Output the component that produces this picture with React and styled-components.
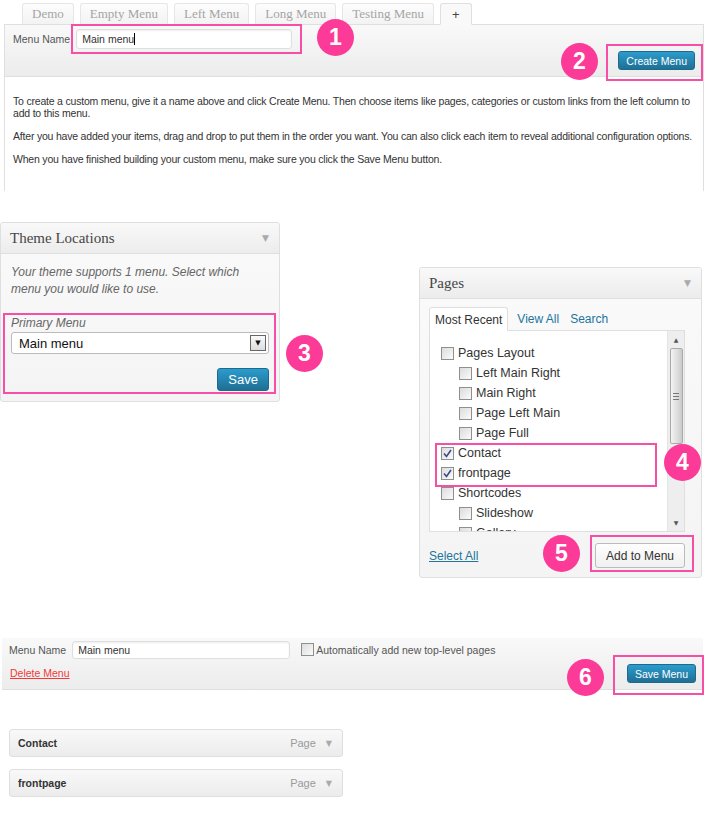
import React from 'react';
import styled, { createGlobalStyle } from 'styled-components';

const GlobalStyle = createGlobalStyle`
  body {
    margin: 0;
    background: #fff;
    font-family: "Liberation Sans", Arial, sans-serif;
    color: #333;
  }
`

const Page = styled.div`
  width: 718px;
  height: 839px;
  overflow: hidden;
`

const Section = styled.div`
  position: relative;
`

const Tabs = styled.div`
  display: flex;
  gap: 6px;
  padding: 3px 0 0 22px;
  position: relative;
  z-index: 1;
`

const Tab = styled.div`
  padding: 0 ${p => p.$plus ? '11px' : '9px'};
  display: flex;
  align-items: center;
  border: 1px solid ${p => p.$active ? '#dfdfdf' : '#e6e6e6'};
  border-bottom: ${p => p.$active ? '1px solid #f9f9f9' : 'none'};
  border-radius: 3px 3px 0 0;
  background: ${p => p.$active ? '#f9f9f9' : 'linear-gradient(#fdfdfd, #f3f3f3)'};
  font-family: ${p => p.$plus ? '"Liberation Sans", Arial, sans-serif' : '"Liberation Serif", "Times New Roman", serif'};
  font-size: 13px;
  color: ${p => p.$plus ? '#444' : '#a5a5a5'};
  margin-bottom: ${p => p.$active ? '-1px' : '0'};
  height: 20px;
`

const EditPanel = styled.div`
  margin-left: 4px;
  width: 698px;
  border: 1px solid #dfdfdf;
  border-bottom: none;
`

const EditHeader = styled.div`
  height: 51px;
  background: linear-gradient(#f9f9f9, #ececec);
  border-bottom: 1px solid #dfdfdf;
  display: flex;
  justify-content: space-between;
  padding: 0 8px;
`

const NameRow = styled.div`
  display: flex;
  align-items: center;
  gap: ${p => p.$gap || 6}px;
  height: ${p => p.$h || 23}px;
  padding-top: ${p => p.$pt ?? 2}px;
`

const Label = styled.span`
  font-size: 10.5px;
  color: #555;
`

const TextInput = styled.div`
  width: ${p => p.$w}px;
  height: ${p => p.$h}px;
  box-sizing: border-box;
  background: #fff;
  border: 1px solid #dfdfdf;
  border-radius: 3px;
  font-size: 10.5px;
  color: #333;
  padding: 0 5px;
  display: flex;
  align-items: center;
  box-shadow: inset 0 1px 2px rgba(0,0,0,0.07);
`

const Caret = styled.span`
  display: inline-block;
  width: 1px;
  height: 12px;
  background: #000;
`

const BlueButton = styled.div`
  height: ${p => p.$h || 19}px;
  box-sizing: border-box;
  padding: 0 ${p => p.$pad || 7}px;
  display: flex;
  align-items: center;
  background: linear-gradient(#2b9ccd, #1f6f94);
  border: 1px solid #1e6a8d;
  border-radius: 3px;
  color: #fff;
  font-size: ${p => p.$size || 10.5}px;
  align-self: flex-end;
  margin-bottom: ${p => p.$mb || 0}px;
`

const EditBody = styled.div`
  height: 114px;
  box-sizing: border-box;
  padding: 7px 8px 0 8px;
  background: #fff;
  font-size: 10.5px;
  letter-spacing: -0.2px;
  line-height: 12px;
  color: #333;

  p {
    margin: 11px 0;
  }
`

const BoxRow = styled.div`
  display: flex;
  justify-content: space-between;
  align-items: flex-start;
  margin-top: 31px;
  padding-right: 16px;
`

const Box = styled.div`
  position: relative;
  width: ${p => p.$w}px;
  margin-top: ${p => p.$top || 0}px;
  box-sizing: border-box;
  border: 1px solid #dfdfdf;
  border-radius: 3px;
  background: linear-gradient(#fafafa, #f4f4f4);
`

const BoxHeader = styled.div`
  height: 30px;
  display: flex;
  align-items: center;
  justify-content: space-between;
  padding: 0 10px 0 9px;
  background: linear-gradient(#f9f9f9, #ececec);
  border-bottom: 1px solid #dfdfdf;
  border-radius: 3px 3px 0 0;
  font-family: "Liberation Serif", "Times New Roman", serif;
  font-size: 15px;
  color: #464646;
`

const Arrow = styled.span`
  font-family: "DejaVu Sans", sans-serif;
  font-size: ${p => p.$size || 9}px;
  color: #aaa;
`

const ThemeBody = styled.div`
  padding: 10px;
`

const Note = styled.div`
  font-style: italic;
  font-size: 12px;
  line-height: 17px;
  color: #666;
  padding-right: 24px;
`

const FieldLabel = styled.div`
  font-style: italic;
  font-size: 12px;
  color: #666;
  margin-top: 18px;
  line-height: 14px;
`

const Select = styled.div`
  margin-top: 2px;
  height: 22px;
  box-sizing: border-box;
  border: 1px solid #bbb;
  border-radius: 3px;
  background: #fff;
  display: flex;
  align-items: center;
  justify-content: space-between;
  padding: 0 2px 0 7px;
  font-size: 13px;
  color: #111;
`

const SelectButton = styled.div`
  width: 14px;
  height: 14px;
  border: 1px solid #666;
  background: linear-gradient(#fafafa, #ddd);
  display: flex;
  align-items: center;
  justify-content: center;
  font-size: 7px;
  color: #111;
  font-family: "DejaVu Sans", sans-serif;
`

const RightAlign = styled.div`
  display: flex;
  justify-content: flex-end;
  margin-top: 14px;
`

const PagesBody = styled.div`
  padding: 7px 16px 9px 9px;
`

const PageTabs = styled.div`
  display: flex;
  align-items: flex-end;
  gap: 7px;
  height: 24px;
`

const PageTab = styled.div`
  height: 24px;
  box-sizing: border-box;
  padding: 0 ${p => p.$active ? 5 : 1}px;
  display: flex;
  align-items: center;
  font-size: 12px;
  color: ${p => p.$active ? '#333' : '#21759b'};
  background: ${p => p.$active ? '#fff' : 'transparent'};
  border: 1px solid ${p => p.$active ? '#dfdfdf' : 'transparent'};
  border-bottom: none;
  border-radius: 3px 3px 0 0;
  margin-bottom: ${p => p.$active ? '-1px' : '0'};
  position: relative;
`

const ListFrame = styled.div`
  height: 202px;
  box-sizing: border-box;
  border: 1px solid #dfdfdf;
  background: #fff;
  display: flex;
`

const ListItems = styled.div`
  flex: 1;
  overflow: hidden;
  padding: 12px 0 0 11px;
`

const Item = styled.div`
  height: 20px;
  display: flex;
  align-items: center;
  gap: 4px;
  padding-left: ${p => p.$child ? 18 : 0}px;
  font-size: 12.5px;
  color: #333;
`

const Check = styled.span`
  width: 13px;
  height: 13px;
  box-sizing: border-box;
  border: 1px solid #8e8f8f;
  background: linear-gradient(135deg, #dcdcdc, #fbfbfb);
  display: flex;
  align-items: center;
  justify-content: center;
`

const ScrollBar = styled.div`
  width: 16px;
  background: #eeeeee;
  border-left: 1px solid #e4e4e4;
  display: flex;
  flex-direction: column;
  align-items: center;
`

const ScrollArrow = styled.div`
  height: 17px;
  display: flex;
  align-items: center;
  justify-content: center;
  font-size: 6px;
  color: #555;
  font-family: "DejaVu Sans", sans-serif;
`

const Thumb = styled.div`
  width: 13px;
  height: 96px;
  box-sizing: border-box;
  border: 1px solid #aaa;
  border-radius: 2px;
  background: linear-gradient(90deg, #f4f4f4, #d8d8d8 70%, #c9c9c9);
  display: flex;
  align-items: center;
  justify-content: center;
`

const Grip = styled.div`
  width: 6px;
  height: 5px;
  border-top: 1px solid #777;
  border-bottom: 1px solid #777;
  position: relative;

  &::after {
    content: '';
    position: absolute;
    left: 0;
    right: 0;
    top: 2px;
    height: 1px;
    background: #777;
  }
`

const Track = styled.div`
  flex: 1;
`

const PagesFooter = styled.div`
  display: flex;
  justify-content: space-between;
  align-items: center;
  margin-top: 11px;
`

const Link = styled.span`
  font-size: 12px;
  color: #21759b;
  text-decoration: underline;
`

const GreyButton = styled.div`
  height: 25px;
  box-sizing: border-box;
  padding: 0 10px;
  display: flex;
  align-items: center;
  border: 1px solid #bbb;
  border-radius: 3px;
  background: linear-gradient(#fefefe, #f0f0f0);
  font-size: 12px;
  color: #333;
`

const SavePanel = styled.div`
  margin: 60px 0 0 2px;
  width: 701px;
  height: 52px;
  box-sizing: border-box;
  background: linear-gradient(#f9f9f9, #ececec);
  border-bottom: 1px solid #dfdfdf;
  display: flex;
  justify-content: space-between;
  padding: 3px 7px 6px 7px;
`

const SaveLeft = styled.div`
  display: flex;
  flex-direction: column;
  gap: 9px;
`

const AutoRow = styled.label`
  display: flex;
  align-items: center;
  gap: 2px;
  margin-left: 5px;
  font-size: 10.5px;
  color: #555;
`

const DeleteLink = styled.span`
  font-size: 10.5px;
  color: #f03a3a;
  text-decoration: underline;
  margin-left: 1px;
  align-self: flex-start;
`

const MenuList = styled.div`
  margin: 39px 0 0 9px;
  display: flex;
  flex-direction: column;
  gap: 12px;
`

const MenuItem = styled.div`
  width: 334px;
  height: 28px;
  box-sizing: border-box;
  border: 1px solid #dfdfdf;
  border-radius: 3px;
  background: linear-gradient(#f9f9f9, #ececec);
  display: flex;
  align-items: center;
  justify-content: space-between;
  padding: 0 10px 0 8px;
  font-size: 10.5px;
  font-weight: bold;
  color: #333;
`

const ItemType = styled.span`
  display: flex;
  align-items: center;
  gap: 10px;
  font-weight: normal;
  font-size: 11px;
  color: #999;
`

const Mark = styled.div`
  position: absolute;
  left: ${p => p.$x}px;
  top: ${p => p.$y}px;
  width: ${p => p.$w}px;
  height: ${p => p.$h}px;
  box-sizing: border-box;
  border: 2px solid #f74fa6;
  z-index: 5;
  pointer-events: none;
`

const Badge = styled.div`
  position: absolute;
  left: ${p => p.$x}px;
  top: ${p => p.$y}px;
  width: 37px;
  height: 37px;
  border-radius: 50%;
  background: #fb3b97;
  color: #fff;
  font-family: "Liberation Sans", Arial, sans-serif;
  font-weight: bold;
  font-size: 23px;
  display: flex;
  align-items: center;
  justify-content: center;
  z-index: 6;
`

const CheckMark = () => (
  <svg width="9" height="9" viewBox="0 0 9 9">
    <path d="M1 4.5 L3.5 7.5 L8 1" fill="none" stroke="#3d4a8a" strokeWidth="1.6" />
  </svg>
)

const pages = [
  { name: 'Pages Layout' },
  { name: 'Left Main Right', child: true },
  { name: 'Main Right', child: true },
  { name: 'Page Left Main', child: true },
  { name: 'Page Full', child: true },
  { name: 'Contact', checked: true },
  { name: 'frontpage', checked: true },
  { name: 'Shortcodes' },
  { name: 'Slideshow', child: true },
  { name: 'Gallery', child: true },
]

const tabs = ['Demo', 'Empty Menu', 'Left Menu', 'Long Menu', 'Testing Menu']

const App = () => {
  return (
    <Page>
      <GlobalStyle />

      <Section>
        <Tabs>
          {tabs.map(t => <Tab key={t}>{t}</Tab>)}
          <Tab $active $plus>+</Tab>
        </Tabs>
        <EditPanel>
          <EditHeader>
            <NameRow>
              <Label>Menu Name</Label>
              <TextInput $w={216} $h={20}>Main menu<Caret /></TextInput>
            </NameRow>
            <BlueButton $mb={6}>Create Menu</BlueButton>
          </EditHeader>
          <EditBody>
            <p>To create a custom menu, give it a name above and click Create Menu. Then choose items like pages, categories or custom links from the left column to add to this menu.</p>
            <p>After you have added your items, drag and drop to put them in the order you want. You can also click each item to reveal additional configuration options.</p>
            <p>When you have finished building your custom menu, make sure you click the Save Menu button.</p>
          </EditBody>
        </EditPanel>
        <Mark $x={71} $y={24} $w={231} $h={30} />
        <Badge $x={317} $y={19}>1</Badge>
        <Mark $x={606} $y={44} $w={97} $h={37} />
        <Badge $x={561} $y={43}>2</Badge>
      </Section>

      <BoxRow>
        <Box $w={280}>
          <BoxHeader>
            Theme Locations
            <Arrow>▼</Arrow>
          </BoxHeader>
          <ThemeBody>
            <Note>Your theme supports 1 menu. Select which menu you would like to use.</Note>
            <FieldLabel>Primary Menu</FieldLabel>
            <Select>
              Main menu
              <SelectButton>▼</SelectButton>
            </Select>
            <RightAlign>
              <BlueButton $h={23} $pad={10} $size={13}>Save</BlueButton>
            </RightAlign>
          </ThemeBody>
          <Mark $x={2} $y={90} $w={273} $h={81} />
          <Badge $x={285} $y={112}>3</Badge>
        </Box>

        <Box $w={283} $top={45}>
          <BoxHeader>
            Pages
            <Arrow>▼</Arrow>
          </BoxHeader>
          <PagesBody>
            <PageTabs>
              <PageTab $active>Most Recent</PageTab>
              <PageTab>View All</PageTab>
              <PageTab>Search</PageTab>
            </PageTabs>
            <ListFrame>
              <ListItems>
                {pages.map(p => (
                  <Item key={p.name} $child={p.child}>
                    <Check>{p.checked && <CheckMark />}</Check>
                    {p.name}
                  </Item>
                ))}
              </ListItems>
              <ScrollBar>
                <ScrollArrow>▲</ScrollArrow>
                <Thumb><Grip /></Thumb>
                <Track />
                <ScrollArrow>▼</ScrollArrow>
              </ScrollBar>
            </ListFrame>
            <PagesFooter>
              <Link>Select All</Link>
              <GreyButton>Add to Menu</GreyButton>
            </PagesFooter>
          </PagesBody>
          <Mark $x={15} $y={175} $w={222} $h={44} />
          <Badge $x={244} $y={176}>4</Badge>
          <Mark $x={170} $y={267} $w={104} $h={37} />
          <Badge $x={123} $y={267}>5</Badge>
        </Box>
      </BoxRow>

      <Section>
        <SavePanel>
          <SaveLeft>
            <NameRow $h={17} $pt={0} $gap={6}>
              <Label>Menu Name</Label>
              <TextInput $w={218} $h={18}>Main menu</TextInput>
              <AutoRow>
                <Check />
                Automatically add new top-level pages
              </AutoRow>
            </NameRow>
            <DeleteLink>Delete Menu</DeleteLink>
          </SaveLeft>
          <BlueButton>Save Menu</BlueButton>
        </SavePanel>
        <Mark $x={613} $y={17} $w={91} $h={40} />
        <Badge $x={567} $y={21}>6</Badge>
      </Section>

      <MenuList>
        <MenuItem>
          Contact
          <ItemType>Page <Arrow $size={8}>▼</Arrow></ItemType>
        </MenuItem>
        <MenuItem>
          frontpage
          <ItemType>Page <Arrow $size={8}>▼</Arrow></ItemType>
        </MenuItem>
      </MenuList>
    </Page>
  );
}

export default App;
